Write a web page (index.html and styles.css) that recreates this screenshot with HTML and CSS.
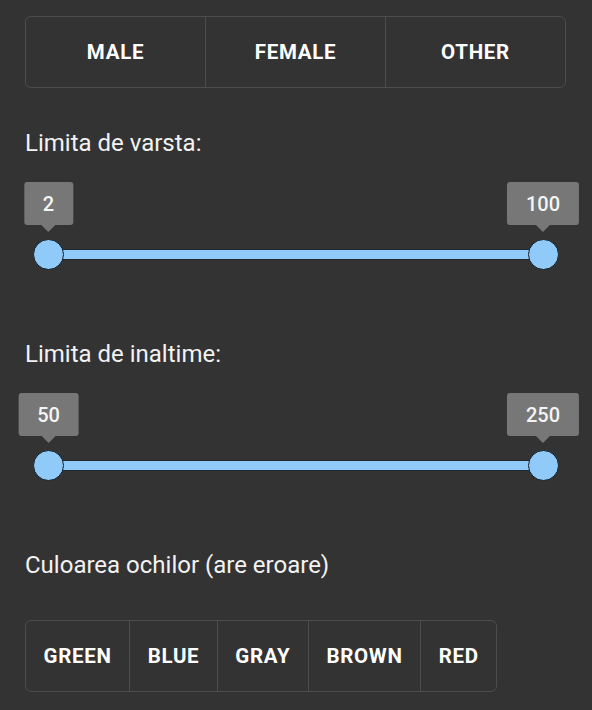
FILE: index.html
```html
<!DOCTYPE html>
<html lang="ro">
<head>
<meta charset="utf-8">
<title>Filtre</title>
<link rel="stylesheet" href="styles.css">
</head>
<body>
<main class="page">
  <div class="group group-gender">
    <button class="btn btn-fill">MALE</button>
    <button class="btn btn-fill">FEMALE</button>
    <button class="btn btn-fill">OTHER</button>
  </div>

  <p class="label label-first">Limita de varsta:</p>
  <div class="slider">
    <div class="track"></div>
    <div class="handle handle-min"><span class="tip">2</span><span class="thumb"></span></div>
    <div class="handle handle-max"><span class="tip">100</span><span class="thumb"></span></div>
  </div>

  <p class="label">Limita de inaltime:</p>
  <div class="slider">
    <div class="track"></div>
    <div class="handle handle-min"><span class="tip">50</span><span class="thumb"></span></div>
    <div class="handle handle-max"><span class="tip">250</span><span class="thumb"></span></div>
  </div>

  <p class="label">Culoarea ochilor (are eroare)</p>
  <div class="group group-colors">
    <button class="btn">GREEN</button>
    <button class="btn">BLUE</button>
    <button class="btn">GRAY</button>
    <button class="btn">BROWN</button>
    <button class="btn">RED</button>
  </div>
</main>
</body>
</html>
```

FILE: styles.css
```css
html, body {
  margin: 0;
  padding: 0;
  background: #333333;
}

body {
  font-family: Roboto, "Liberation Sans", sans-serif;
  color: #f2f2f2;
}

.page {
  padding: 16px 26px 0 25px;
  display: flex;
  flex-direction: column;
  align-items: flex-start;
}

.group {
  display: flex;
  height: 72px;
  box-sizing: border-box;
  border: 1px solid #4c4c4c;
  border-radius: 6px;
}

.group-gender {
  align-self: stretch;
}

.btn {
  background: transparent;
  border: 0;
  border-left: 1px solid #4c4c4c;
  margin: 0;
  padding: 0 17.5px;
  font-family: Roboto, "Liberation Sans", sans-serif;
  font-weight: 700;
  font-size: 20.5px;
  letter-spacing: 0.7px;
  color: #ffffff;
  display: flex;
  align-items: center;
  justify-content: center;
}

.btn:first-child {
  border-left: 0;
}

.btn-fill {
  flex: 1 1 0;
}

.label {
  margin: 45px 0 0 0;
  font-size: 24px;
  line-height: 28px;
  font-weight: 400;
  color: #f2f2f2;
}

.label-first {
  margin-top: 41px;
}

.slider {
  position: relative;
  align-self: stretch;
  margin: 25px 0 25px 0;
  padding: 68px 23px 11px 23px;
}

.track {
  height: 9px;
  background: #90caf9;
  box-shadow: 0 0 0 1px #1f2a33;
  border-radius: 1px;
}

.handle {
  position: absolute;
  top: 0;
  width: 0;
  height: 88px;
}

.handle-min {
  left: 23.5px;
}

.handle-max {
  right: 23px;
}

.tip {
  position: absolute;
  top: 0;
  left: 0;
  transform: translateX(-50%);
  height: 43px;
  padding: 0 19px;
  box-sizing: border-box;
  display: flex;
  align-items: center;
  background: #777777;
  border-radius: 3px;
  font-size: 20px;
  font-weight: 500;
  color: #f4f4f4;
  white-space: nowrap;
}

.tip::after {
  content: "";
  position: absolute;
  left: 50%;
  top: 43px;
  margin-left: -7px;
  border-left: 7px solid transparent;
  border-right: 7px solid transparent;
  border-top: 7px solid #777777;
}

.thumb {
  position: absolute;
  top: 57px;
  left: -15.5px;
  width: 31px;
  height: 31px;
  box-sizing: border-box;
  border-radius: 50%;
  background: #90caf9;
  border: 1px solid #15202a;
}

.group-colors {
  margin-top: 41px;
}
```
